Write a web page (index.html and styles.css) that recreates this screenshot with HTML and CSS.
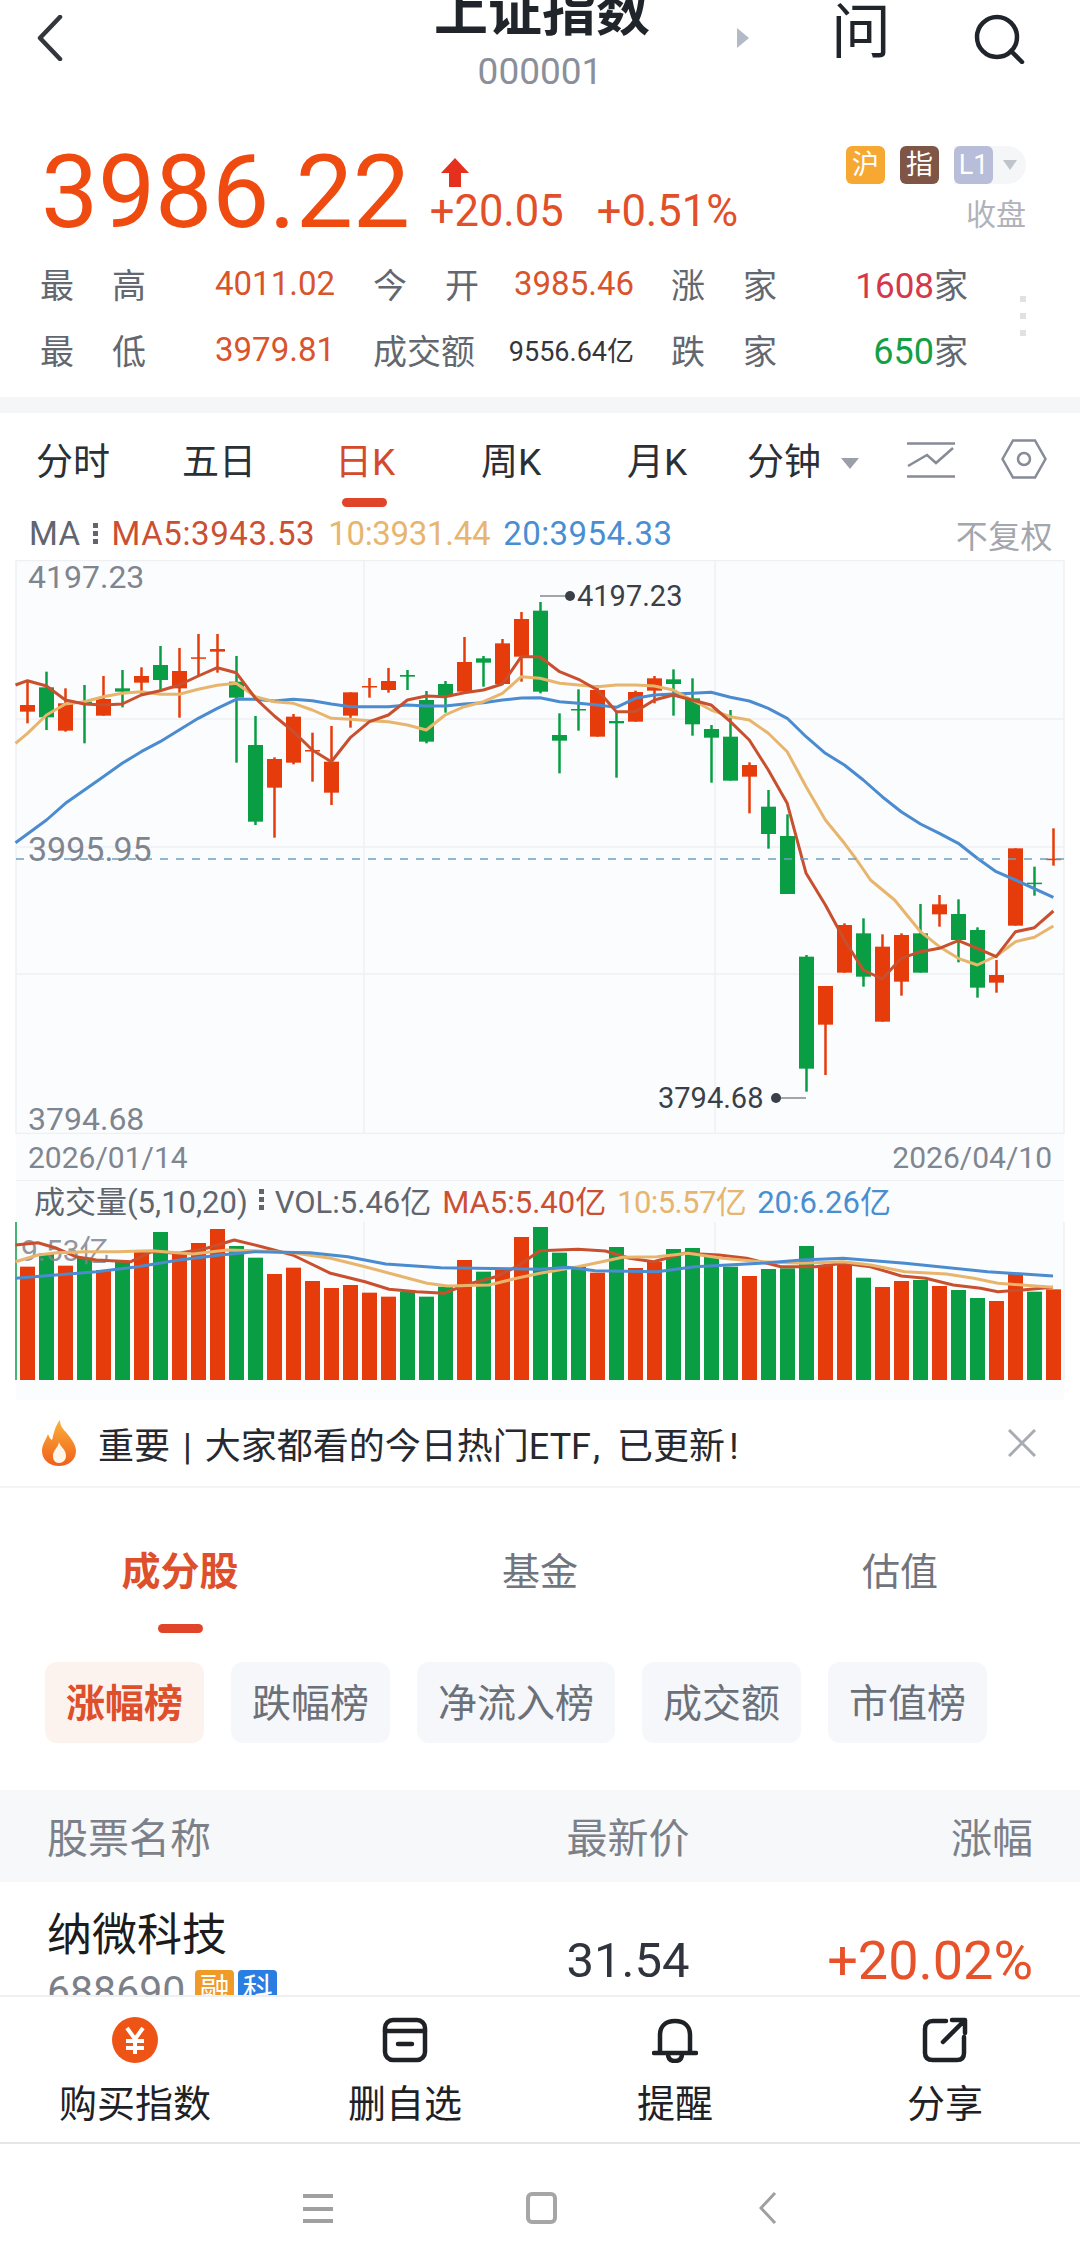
FILE: index.html
```html
<!DOCTYPE html>
<html lang="zh-CN">
<head>
  <meta charset="UTF-8" />
  <meta name="viewport" content="width=device-width, initial-scale=1.0"/>
  <title>上证指数</title>
  <link rel="stylesheet" href="styles.css">
</head>
<body>

  <header class="top-bar">
    <svg class="back-icon" viewBox="0 0 26 46"><path d="M23 2 3 23l20 21"/></svg>
    <div class="title-block">
      <h1 class="title">上证指数</h1>
      <div class="code">000001</div>
    </div>
    <div class="top-actions">
      <svg class="next-icon" viewBox="0 0 12 20"><path d="M0 0l12 10L0 20z"/></svg>
      <span class="ask">问</span>
      <svg class="search-icon" viewBox="0 0 54 50"><circle cx="25" cy="23" r="20"/><path d="M39 37l11 11"/></svg>
    </div>
  </header>

  <section class="quote">
    <div class="price-row">
      <div class="price">3986.22</div>
      <div class="change">
        <svg class="up-arrow" viewBox="0 0 28 29"><path d="M14 0l14 15h-8v14H8V15H0z"/></svg>
        <div class="change-nums"><span>+20.05</span><span>+0.51%</span></div>
      </div>
      <div class="status">
        <div class="badges">
          <span class="badge badge-hu">沪</span>
          <span class="badge badge-zhi">指</span>
          <span class="level"><span class="badge badge-l1">L1</span><i class="level-caret"></i></span>
        </div>
        <div class="status-text">收盘</div>
      </div>
    </div>

    <div class="stats">
      <div class="stat-label"><span>最</span><span>高</span></div>
      <div class="stat-val">4011.02</div>
      <div class="stat-label"><span>今</span><span>开</span></div>
      <div class="stat-val">3985.46</div>
      <div class="stat-label"><span>涨</span><span>家</span></div>
      <div class="stat-count"><b class="rise">1608</b>家</div>
      <div class="more-dots"><i></i><i></i><i></i></div>
      <div class="stat-label"><span>最</span><span>低</span></div>
      <div class="stat-val">3979.81</div>
      <div class="stat-label"><span>成交额</span></div>
      <div class="stat-val stat-amount">9556.64亿</div>
      <div class="stat-label"><span>跌</span><span>家</span></div>
      <div class="stat-count"><b class="fall">650</b>家</div>
    </div>
  </section>

  <div class="band"></div>

  <nav class="period-tabs">
    <div class="period">分时</div>
    <div class="period">五日</div>
    <div class="period active">日K</div>
    <div class="period">周K</div>
    <div class="period">月K</div>
    <div class="period">分钟<i class="caret"></i></div>
    <svg class="line-icon" viewBox="0 0 48 36"><path d="M0 1.5h48M0 34.5h48M1 24l19-11 9 8 17-15"/></svg>
    <svg class="hex-icon" viewBox="0 0 46 40"><path d="M1.5 20 12 1.5h22L44.500 20 34 38.500H12z"/><circle cx="23" cy="20" r="6"/></svg>
  </nav>

  <div class="ma-row">
    <span class="ma-name">MA</span><i class="ma-dots"></i>
    <span class="c5">MA5:3943.53</span>
    <span class="c10">10:3931.44</span>
    <span class="c20">20:3954.33</span>
    <span class="adjust">不复权</span>
  </div>

  <svg id="kline" class="kline" width="1080" height="574"></svg>

  <div class="date-row"><span>2026/01/14</span><span>2026/04/10</span></div>

  <div class="vol-legend">
    <span class="vol-name">成交量(5,10,20)</span><i class="ma-dots"></i>
    <span class="vol-name">VOL:5.46亿</span>
    <span class="c5">MA5:5.40亿</span>
    <span class="c10">10:5.57亿</span>
    <span class="c20">20:6.26亿</span>
  </div>

  <svg id="volume" class="volume" width="1080" height="178"></svg>

  <div class="notice">
    <svg class="fire-icon" viewBox="0 0 36 46">
      <defs>
        <linearGradient id="fire" x1="0" y1="0" x2="0" y2="1">
          <stop offset="0" stop-color="#fbb03b"/>
          <stop offset="1" stop-color="#f0601a"/>
        </linearGradient>
      </defs>
      <path fill="url(#fire)" d="M19 0c0 8 5 10 9 16 3 4 7 9 7 15 0 9-8 15-17 15S1 40 1 31c0-7 4-11 6-17 1 3 2 5 4 6 2-7 3-14 8-20z"/>
      <path fill="#fff6ea" d="M18 22c1 5 7 7 7 14 0 4-3 7-7 7s-6-3-6-7c0-6 5-8 6-14z"/>
    </svg>
    <span class="notice-text">重要<span class="notice-bar">|</span>大家都看的今日热门ETF<span class="notice-comma">,</span>已更新<span class="notice-end">!</span></span>
    <svg class="close-icon" viewBox="0 0 28 28"><path d="M1 1l26 26M27 1 1 27"/></svg>
  </div>

  <nav class="sub-tabs">
    <div class="sub-tab active">成分股<i class="sub-bar"></i></div>
    <div class="sub-tab">基金</div>
    <div class="sub-tab">估值</div>
  </nav>

  <div class="chips">
    <span class="chip active">涨幅榜</span>
    <span class="chip">跌幅榜</span>
    <span class="chip">净流入榜</span>
    <span class="chip">成交额</span>
    <span class="chip">市值榜</span>
  </div>

  <div class="table-head">
    <span>股票名称</span>
    <span class="col-price">最新价</span>
    <span class="col-change">涨幅</span>
  </div>

  <div class="list">
    <div class="stock">
      <div>
        <div class="stock-name">纳微科技</div>
        <div class="stock-code">688690<span class="tag tag-rong">融</span><span class="tag tag-ke">科</span></div>
      </div>
      <div class="col-price stock-price">31.54</div>
      <div class="col-change stock-change">+20.02%</div>
    </div>
  </div>

  <footer class="actions">
    <div class="action">
      <svg class="action-icon" viewBox="0 0 46 46">
        <circle cx="23" cy="23" r="23" fill="#ee5416"/>
        <path class="yen" d="M15 11l8 11 8-11M14 24h18M14 31h18M23 22v15"/>
      </svg>
      <span>购买指数</span>
    </div>
    <div class="action">
      <svg class="action-icon line" viewBox="0 0 46 46">
        <rect x="3" y="3" width="40" height="40" rx="8"/>
        <path d="M3 14h40M16 27h14"/>
      </svg>
      <span>删自选</span>
    </div>
    <div class="action">
      <svg class="action-icon line" viewBox="0 0 46 46">
        <path d="M2 36h42M8 36V18C8 9 14 4 23 4s15 5 15 14v18M16 37c0 5 3 7 7 7s7-2 7-7"/>
      </svg>
      <span>提醒</span>
    </div>
    <div class="action">
      <svg class="action-icon line" viewBox="0 0 46 46">
        <path d="M24 4H11C6 4 3 7 3 12v24c0 5 3 7 8 7h24c5 0 7-3 7-7V20M21 25 42 4M30 3h13v13"/>
      </svg>
      <span>分享</span>
    </div>
  </footer>

  <div class="sys-nav">
    <div class="sys-menu"><i></i><i></i><i></i></div>
    <div class="sys-home"></div>
    <svg class="sys-back" viewBox="0 0 18 32"><path d="M16 1 2 16l14 15"/></svg>
  </div>

  <script src="chart.js"></script>
</body>
</html>
```

FILE: styles.css
```css
* {
  box-sizing: border-box;
}

body {
  margin: 0;
  width: 1080px;
  height: 2260px;
  overflow: hidden;
  background: #fff;
  font-family: Roboto, "Noto Sans CJK SC", sans-serif;
  color: #2b2f36;
}

i {
  display: block;
}

svg {
  display: block;
}

/* top bar */
.top-bar {
  display: grid;
  grid-template-columns: 434px 212px 1fr;
  height: 130px;
}

.back-icon {
  width: 26px;
  height: 46px;
  margin: 15px 0 0 37px;
  fill: none;
  stroke: #33363c;
  stroke-width: 4.5;
  stroke-linecap: round;
  stroke-linejoin: round;
}

.title-block {
  text-align: center;
}

.title {
  margin: -17px 0 0;
  font-size: 54px;
  line-height: 60px;
  font-weight: 700;
  color: #20242b;
  white-space: nowrap;
}

.code {
  margin-top: 9px;
  font-size: 37px;
  line-height: 40px;
  color: #8a8f99;
}

.top-actions {
  display: flex;
  align-items: flex-start;
  padding-left: 91px;
}

.next-icon {
  width: 12px;
  height: 20px;
  margin-top: 28px;
  fill: #b4b9c7;
}

.ask {
  margin: -4px 0 0 82px;
  font-size: 60px;
  line-height: 74px;
  color: #20242b;
}

.search-icon {
  width: 54px;
  height: 50px;
  margin: 14px 0 0 81px;
  fill: none;
  stroke: #20242b;
  stroke-width: 4.5;
  stroke-linecap: round;
}

/* quote */
.quote {
  height: 267px;
}

.price-row {
  display: flex;
  height: 120px;
  padding: 12px 54px 0 41px;
}

.price {
  font-size: 102px;
  line-height: 100px;
  color: #ef4a10;
  letter-spacing: -0.3px;
}

.change {
  margin-left: 20px;
  padding-top: 16px;
}

.up-arrow {
  width: 28px;
  height: 29px;
  margin-left: 11px;
  fill: #e5301e;
}

.change-nums {
  display: flex;
  gap: 33px;
  margin-top: 5px;
  font-size: 43.5px;
  line-height: 40px;
  color: #e2502a;
}

.status {
  margin-left: auto;
  padding-top: 4px;
}

.badges {
  display: flex;
  gap: 15px;
}

.badge {
  display: block;
  width: 39px;
  height: 38px;
  border-radius: 6px;
  font-size: 27px;
  line-height: 38px;
  text-align: center;
  color: #fff;
}

.badge-hu {
  background: #f6a832;
}

.badge-zhi {
  background: #7f5546;
}

.badge-l1 {
  background: #b8bdd9;
}

.level {
  display: flex;
  align-items: center;
  width: 72px;
  border-radius: 0 19px 19px 0;
  background: #f5f6f8;
}

.level-caret {
  margin-left: 10px;
  border-left: 7px solid transparent;
  border-right: 7px solid transparent;
  border-top: 10px solid #bfc3cc;
}

.status-text {
  margin-top: 15px;
  font-size: 30px;
  line-height: 32px;
  text-align: right;
  color: #b0b3ba;
}

.stats {
  display: grid;
  grid-template-columns: 105px 189px 144px 155px 143px 191px 58px;
  grid-auto-rows: 66px;
  align-items: center;
  padding-left: 41px;
}

.stat-label {
  display: flex;
  justify-content: space-between;
  justify-self: end;
  width: 106px;
  font-size: 34px;
  color: #63676f;
  white-space: nowrap;
}

.stat-val {
  font-size: 33px;
  text-align: right;
  color: #d9542b;
  white-space: nowrap;
}

.stat-amount {
  font-size: 27px;
  color: #33363c;
}

.stat-count {
  font-size: 34px;
  text-align: right;
  color: #63676f;
}

.stat-count b {
  font-weight: 400;
}

.rise {
  font-size: 35px;
  color: #d5384a;
}

.fall {
  font-size: 36px;
  color: #12a045;
}

.more-dots {
  grid-row: 1 / 3;
  grid-column: 7;
  justify-self: end;
  display: flex;
  flex-direction: column;
  gap: 11px;
}

.more-dots i {
  width: 6px;
  height: 6px;
  background: #dfe1e5;
}

.band {
  height: 16px;
  background: #f5f6f8;
}

/* period tabs */
.period-tabs {
  display: flex;
  align-items: flex-start;
  height: 98px;
}

.period {
  position: relative;
  display: flex;
  align-items: center;
  justify-content: center;
  width: 146px;
  height: 94px;
  padding-bottom: 2px;
  font-size: 37px;
  color: #2b2f36;
}

.period.active {
  color: #d34a2c;
}

.period.active::after {
  content: "";
  position: absolute;
  left: 50px;
  bottom: 0;
  width: 45px;
  height: 9px;
  border-radius: 5px;
  background: #e0452a;
}

.caret {
  margin: 8px 0 0 20px;
  border-left: 9px solid transparent;
  border-right: 9px solid transparent;
  border-top: 11px solid #9a9fa9;
}

.line-icon {
  width: 48px;
  height: 36px;
  margin: 29px 0 0 31px;
  fill: none;
  stroke: #868b96;
  stroke-width: 2.5;
}

.hex-icon {
  width: 46px;
  height: 40px;
  margin: 26px 0 0 46px;
  fill: none;
  stroke: #868b96;
  stroke-width: 2.5;
}

/* MA legend */
.ma-row {
  display: flex;
  align-items: center;
  gap: 13px;
  height: 49px;
  padding: 0 27px 4px 29px;
  font-size: 33px;
  letter-spacing: 0.4px;
  white-space: nowrap;
}

.ma-name {
  color: #60656e;
}

.ma-dots {
  flex: none;
  width: 5px;
  height: 21px;
  background: repeating-linear-gradient(#60656e 0 5px, transparent 5px 8px);
}

.c5 {
  color: #cb4f32;
}

.ma-row .c5 {
  letter-spacing: 0.6px;
}

.c10 {
  color: #e7b56e;
}

.ma-row .c10 {
  letter-spacing: -0.3px;
}

.c20 {
  color: #4a8ed2;
}

.adjust {
  margin-left: auto;
  font-size: 32px;
  color: #a3a6ad;
}

/* chart text */
.axis-text {
  font-size: 32px;
  fill: #7f858f;
}

.axis-mid {
  font-size: 34px;
}

.mark-text {
  font-size: 29px;
  fill: #3a3f48;
}

.vol-max {
  font-size: 30px;
  fill: #7f858f;
  opacity: 0.85;
}

.date-row {
  display: flex;
  align-items: center;
  justify-content: space-between;
  height: 46px;
  margin: 0 16px;
  padding: 0 12px;
  background: #fbfcfe;
  font-size: 30px;
  color: #808690;
}

.vol-legend {
  display: flex;
  align-items: center;
  gap: 11px;
  height: 42px;
  margin: 0 16px;
  padding: 0 0 4px 18px;
  border-top: 1px solid #eef0f3;
  background: #fbfcfe;
  font-size: 31px;
  white-space: nowrap;
}

.vol-legend .c10 {
  letter-spacing: -0.6px;
}

.vol-name {
  color: #60656e;
}

/* notice */
.notice {
  display: flex;
  align-items: center;
  height: 88px;
  padding: 0 44px 0 41px;
  border-bottom: 2px solid #f3f4f6;
}

.fire-icon {
  width: 36px;
  height: 46px;
}

.notice-text {
  margin-left: 21px;
  font-size: 36px;
  color: #26292f;
}

.notice-bar {
  margin: 0 13px;
}

.notice-comma {
  margin: 0 17px 0 2px;
}

.notice-end {
  margin-left: 4px;
}

.close-icon {
  width: 28px;
  height: 28px;
  margin-left: auto;
  fill: none;
  stroke: #a8abb1;
  stroke-width: 3;
}

/* sub tabs */
.sub-tabs {
  display: grid;
  grid-template-columns: repeat(3, 360px);
  height: 144px;
  padding-top: 57px;
}

.sub-tab {
  font-size: 38px;
  line-height: 54px;
  text-align: center;
  color: #70757e;
}

.sub-tab.active {
  font-size: 39px;
  font-weight: 700;
  color: #de4f2b;
}

.sub-bar {
  width: 45px;
  height: 9px;
  margin: 25px auto 0;
  border-radius: 5px;
  background: #e0452a;
}

/* chips */
.chips {
  display: flex;
  gap: 27px;
  margin-top: 30px;
  padding-left: 45px;
}

.chip {
  height: 81px;
  padding: 0 21px;
  border-radius: 12px;
  background: #f5f7fa;
  font-size: 39px;
  line-height: 85px;
  color: #6b7079;
}

.chip.active {
  background: #fdf3ee;
  font-weight: 700;
  color: #de4f2b;
}

/* table */
.table-head,
.stock {
  display: grid;
  grid-template-columns: 481px 200px 305px;
  align-items: center;
  padding: 0 47px;
}

.table-head {
  height: 92px;
  margin-top: 47px;
  padding-bottom: 2px;
  background: #f6f8fa;
  font-size: 41px;
  color: #7c8088;
}

.col-price {
  text-align: center;
}

.col-change {
  text-align: right;
}

.list {
  height: 113px;
  overflow: hidden;
}

.stock {
  height: 156px;
}

.stock-name {
  font-size: 45px;
  line-height: 56px;
  color: #1c1c1c;
}

.stock-code {
  display: flex;
  align-items: flex-start;
  margin-top: 5px;
  font-size: 41px;
  line-height: 44px;
  color: #7c8088;
}

.tag {
  width: 39px;
  height: 38px;
  margin: 1px 0 0 4px;
  border-radius: 4px;
  font-size: 30px;
  line-height: 38px;
  text-align: center;
  color: #fff;
}

.tag-rong {
  margin-left: 10px;
  background: #f09a28;
}

.tag-ke {
  background: #2a7de1;
}

.stock-price {
  font-size: 49px;
  color: #30343c;
}

.stock-change {
  font-size: 54px;
  color: #e8522a;
}

/* bottom actions */
.actions {
  display: grid;
  grid-template-columns: repeat(4, 270px);
  height: 149px;
  border-top: 2px solid #eeeff1;
  border-bottom: 2px solid #e6e6e6;
}

.action {
  display: flex;
  flex-direction: column;
  align-items: center;
  padding-top: 20px;
  font-size: 38px;
  line-height: 46px;
  color: #1e2126;
}

.action-icon {
  width: 46px;
  height: 46px;
  margin-bottom: 18px;
}

.action-icon.line {
  fill: none;
  stroke: #1e2126;
  stroke-width: 4.5;
  stroke-linecap: round;
  stroke-linejoin: round;
}

.yen {
  fill: none;
  stroke: #fff;
  stroke-width: 4;
}

/* system nav */
.sys-nav {
  display: flex;
  justify-content: center;
  padding: 48px 0 0;
}

.sys-menu {
  display: flex;
  flex-direction: column;
  justify-content: space-between;
  width: 30px;
  height: 29px;
  margin-top: 2px;
}

.sys-menu i {
  height: 4px;
  background: #a0a0a0;
}

.sys-home {
  width: 31px;
  height: 32px;
  margin-left: 193px;
  border: 4px solid #a6a6a6;
  border-radius: 6px;
}

.sys-back {
  width: 18px;
  height: 32px;
  margin-left: 202px;
  fill: none;
  stroke: #a0a0a0;
  stroke-width: 3;
}
```

FILE: chart.js
```js
// numbers were read off a 2.904x / 3x crop of the chart, so convert here
const sx = (x) => x / 2.904;
const mainY = (y) => (y - 480) / 3;
const volY = (y) => (y - 1026) / 3;

const RED = "#e63b0a";
const GREEN = "#0a9e44";
const MA5 = "#c9502f";
const MA10 = "#e8b56d";
const MA20 = "#4a8ccf";

// [up?, wick top, body top, body bottom, wick bottom]
const candles = [
  [1, 845, 915, 935, 970], [0, 815, 862, 952, 990], [1, 865, 910, 992, 995],
  [0, 855, 905, 908, 1030], [1, 828, 897, 947, 947], [0, 810, 865, 875, 922],
  [1, 802, 828, 848, 885], [0, 738, 795, 840, 870], [1, 744, 813, 865, 953],
  [1, 702, 772, 775, 825], [1, 702, 747, 755, 818], [0, 768, 845, 893, 1088],
  [0, 948, 1035, 1265, 1275], [1, 1072, 1077, 1163, 1313], [1, 942, 950, 1088, 1093],
  [1, 998, 1050, 1053, 1145], [1, 978, 1085, 1178, 1215], [1, 877, 877, 947, 983],
  [1, 834, 858, 861, 893], [1, 804, 843, 870, 878], [0, 810, 825, 830, 870],
  [0, 873, 900, 1025, 1030], [0, 843, 852, 888, 938], [1, 711, 786, 875, 880],
  [0, 768, 775, 788, 860], [1, 717, 730, 852, 855], [1, 636, 657, 770, 845],
  [0, 606, 632, 875, 880], [0, 940, 1005, 1022, 1120], [0, 868, 927, 930, 992],
  [1, 855, 870, 1010, 1010], [0, 935, 963, 970, 1133], [1, 872, 876, 965, 965],
  [1, 828, 835, 872, 910], [0, 808, 838, 852, 947], [0, 835, 895, 973, 1007],
  [0, 975, 987, 1013, 1148], [0, 930, 1010, 1142, 1142], [1, 1087, 1095, 1130, 1240],
  [0, 1170, 1220, 1302, 1346], [0, 1243, 1308, 1482, 1482], [0, 1665, 1670, 2006, 2075],
  [1, 1758, 1758, 1874, 2025], [1, 1570, 1575, 1718, 1718], [0, 1555, 1600, 1730, 1760],
  [1, 1603, 1640, 1865, 1865], [1, 1600, 1605, 1745, 1787], [0, 1512, 1600, 1718, 1718],
  [1, 1485, 1513, 1543, 1580], [0, 1498, 1542, 1620, 1687], [0, 1582, 1590, 1763, 1793],
  [1, 1680, 1725, 1748, 1778], [1, 1345, 1345, 1577, 1577], [0, 1400, 1448, 1452, 1487],
  [1, 1285, 1376, 1379, 1397],
];

const ma5 = [
  [45, 855], [80, 842], [135, 858], [190, 900], [245, 912], [300, 915], [355, 912],
  [410, 885], [465, 872], [520, 855], [576, 828], [631, 803], [686, 818], [742, 895],
  [797, 948], [852, 995], [907, 1050], [962, 1085], [1018, 1012], [1073, 965], [1128, 945],
  [1183, 900], [1238, 888], [1293, 890], [1348, 878], [1404, 870], [1459, 852], [1514, 770],
  [1568, 770], [1625, 815], [1680, 838], [1735, 870], [1790, 935], [1845, 935], [1900, 900],
  [1955, 885], [2010, 900], [2065, 915], [2121, 965], [2176, 1020], [2231, 1110], [2286, 1210],
  [2341, 1420], [2397, 1515], [2452, 1620], [2507, 1710], [2562, 1737], [2617, 1675],
  [2673, 1655], [2728, 1645], [2783, 1622], [2838, 1645], [2893, 1670], [2949, 1595],
  [3004, 1583], [3059, 1533],
];

const ma10 = [
  [45, 1030], [80, 1000], [135, 945], [190, 912], [245, 905], [300, 890], [355, 880],
  [410, 875], [465, 883], [520, 883], [576, 868], [631, 856], [686, 850], [742, 890],
  [797, 905], [852, 910], [907, 930], [962, 955], [1018, 958], [1073, 962], [1128, 965],
  [1183, 975], [1238, 990], [1293, 945], [1348, 920], [1404, 905], [1459, 880], [1514, 830],
  [1568, 835], [1625, 850], [1680, 855], [1735, 860], [1790, 855], [1845, 855], [1900, 858],
  [1955, 870], [2010, 900], [2065, 930], [2121, 950], [2176, 960], [2231, 1000], [2286, 1055],
  [2341, 1160], [2397, 1260], [2452, 1330], [2486, 1377], [2528, 1440], [2598, 1500],
  [2673, 1595], [2728, 1640], [2783, 1675], [2838, 1695], [2893, 1668], [2949, 1625],
  [3004, 1612], [3059, 1578],
];

const ma20 = [
  [45, 1328], [135, 1260], [190, 1210], [245, 1170], [300, 1130], [355, 1090], [410, 1055],
  [465, 1025], [520, 990], [576, 955], [631, 925], [686, 898], [742, 898], [797, 903],
  [852, 898], [907, 902], [962, 912], [1018, 920], [1073, 920], [1128, 920], [1183, 915],
  [1238, 918], [1293, 918], [1348, 912], [1404, 908], [1459, 900], [1514, 894], [1568, 893],
  [1625, 905], [1680, 910], [1735, 915], [1790, 922], [1845, 895], [1900, 885], [1955, 882],
  [2010, 880], [2065, 877], [2121, 892], [2176, 903], [2231, 925], [2286, 955], [2341, 1010],
  [2397, 1060], [2452, 1095], [2507, 1140], [2562, 1190], [2617, 1235], [2673, 1272],
  [2728, 1300], [2783, 1330], [2838, 1375], [2893, 1415], [2949, 1440], [3059, 1492],
];

// tops of the volume bars, same order as the candles
const volTops = [
  1160, 1120, 1157, 1133, 1170, 1145, 1112, 1056, 1120, 1089, 1047, 1098, 1133, 1182,
  1163, 1203, 1224, 1215, 1238, 1250, 1235, 1250, 1220, 1140, 1175, 1170, 1071, 1041,
  1118, 1160, 1178, 1101, 1164, 1145, 1107, 1104, 1130, 1160, 1188, 1167, 1165, 1098,
  1155, 1155, 1193, 1221, 1203, 1200, 1218, 1230, 1254, 1263, 1182, 1235, 1228,
];

const volUp = [
  1, 0, 1, 0, 1, 0, 1, 0, 1, 1, 1, 0, 0, 1, 1, 1, 1, 1, 1, 1, 0, 0, 0, 1, 0, 1, 1, 0,
  0, 0, 1, 0, 1, 1, 0, 0, 0, 0, 1, 0, 0, 0, 1, 1, 0, 1, 1, 0, 1, 0, 0, 1, 1, 0, 1,
];

const vol5 = [
  [45, 1095], [110, 1088], [165, 1105], [220, 1130], [280, 1140], [380, 1145], [440, 1115],
  [520, 1120], [600, 1105], [680, 1080], [760, 1100], [850, 1125], [960, 1180], [1060, 1205],
  [1130, 1228], [1210, 1235], [1290, 1240], [1350, 1215], [1440, 1190], [1500, 1160],
  [1568, 1112], [1678, 1108], [1758, 1113], [1828, 1135], [1898, 1145], [1988, 1120],
  [2088, 1125], [2168, 1135], [2268, 1160], [2368, 1160], [2448, 1150], [2528, 1160],
  [2618, 1188], [2688, 1195], [2768, 1215], [2848, 1225], [2898, 1235], [2968, 1230], [3058, 1222],
];

const vol10 = [
  [45, 1145], [110, 1125], [165, 1118], [250, 1115], [340, 1115], [440, 1112], [560, 1122],
  [660, 1110], [740, 1112], [850, 1118], [960, 1135], [1060, 1160], [1150, 1185], [1240, 1210],
  [1300, 1218], [1420, 1215], [1500, 1195], [1568, 1180], [1678, 1160], [1748, 1145],
  [1808, 1132], [1908, 1130], [1998, 1120], [2098, 1135], [2208, 1145], [2328, 1150],
  [2448, 1145], [2528, 1155], [2628, 1175], [2748, 1182], [2828, 1195], [2898, 1210],
  [2968, 1215], [3058, 1222],
];

const vol20 = [
  [45, 1195], [135, 1187], [280, 1175], [400, 1160], [520, 1140], [640, 1125], [740, 1115],
  [900, 1118], [1010, 1130], [1120, 1152], [1280, 1163], [1568, 1168], [1648, 1162],
  [1728, 1172], [1908, 1175], [2018, 1160], [2208, 1150], [2328, 1140], [2448, 1135],
  [2628, 1150], [2868, 1175], [3058, 1188],
];

function barX(i) {
  return 27.5 + 19 * i;
}

function rect(x, y, w, h, fill) {
  return `<rect x="${x}" y="${y}" width="${w}" height="${h}" fill="${fill}"/>`;
}

function hline(x1, x2, y, color) {
  return `<line x1="${x1}" x2="${x2}" y1="${y}" y2="${y}" stroke="${color}" stroke-width="1.500"/>`;
}

function vline(x, y1, y2, color) {
  return `<line x1="${x}" x2="${x}" y1="${y1}" y2="${y2}" stroke="${color}" stroke-width="1.500"/>`;
}

function maLine(points, toY, color) {
  const pts = points.map((p) => `${sx(p[0]).toFixed(1)},${toY(p[1]).toFixed(1)}`).join(" ");
  return `<polyline points="${pts}" fill="none" stroke="${color}" stroke-width="3" stroke-linejoin="round"/>`;
}

function drawKline() {
  const grid = "#eef0f3";
  let out = rect(16, 0, 1048, 574, "#fbfcfe");
  out += hline(16, 1064, 0.5, grid) + hline(16, 1064, 159, grid);
  out += hline(16, 1064, 287, grid) + hline(16, 1064, 414, grid) + hline(16, 1064, 573.5, grid);
  out += vline(16, 0, 574, grid) + vline(364, 0, 574, grid) + vline(715, 0, 574, grid) + vline(1064, 0, 574, grid);

  candles.forEach((c, i) => {
    const color = c[0] ? RED : GREEN;
    const x = barX(i);
    const bodyH = Math.max((c[3] - c[2]) / 3, 1.5);
    out += rect(x - 1.25, mainY(c[1]), 2.5, (c[4] - c[1]) / 3, color);
    out += rect(x - 7.5, mainY(c[2]), 15, bodyH, color);
  });

  out += maLine(ma20, mainY, MA20) + maLine(ma10, mainY, MA10) + maLine(ma5, mainY, MA5);

  // last close
  out += `<line x1="16" x2="1064" y1="299" y2="299" stroke="#6f9fc4" stroke-width="1.500" stroke-dasharray="8 8"/>`;

  out += `<text class="axis-text" x="28" y="28">4197.23</text>`;
  out += `<text class="axis-text axis-mid" x="28" y="301">3995.95</text>`;
  out += `<text class="axis-text" x="28" y="570">3794.68</text>`;

  // high and low marks
  out += `<line x1="540" x2="566" y1="36" y2="36" stroke="#85888f" stroke-width="1.500"/>`;
  out += `<circle cx="570" cy="36" r="5" fill="#3a3f48"/>`;
  out += `<text class="mark-text" x="577" y="46">4197.23</text>`;
  out += `<line x1="780" x2="806" y1="538" y2="538" stroke="#85888f" stroke-width="1.500"/>`;
  out += `<circle cx="776" cy="538" r="5" fill="#3a3f48"/>`;
  out += `<text class="mark-text" x="658" y="548">3794.68</text>`;

  document.getElementById("kline").innerHTML = out;
}

function drawVolume() {
  const grid = "#eef0f3";
  let out = rect(16, 0, 1048, 178, "#fbfcfe");
  out += vline(364, 0, 158, grid) + vline(715, 0, 158, grid) + vline(1064, 0, 158, grid);
  out += vline(16, 0, 158, GREEN);

  volTops.forEach((top, i) => {
    out += rect(barX(i) - 7.5, volY(top), 15, 158 - volY(top), volUp[i] ? RED : GREEN);
  });

  out += `<text class="vol-max" x="21" y="39">9.53亿</text>`;
  out += maLine(vol5, volY, MA5) + maLine(vol10, volY, MA10) + maLine(vol20, volY, MA20);

  document.getElementById("volume").innerHTML = out;
}

drawKline();
drawVolume();
```
